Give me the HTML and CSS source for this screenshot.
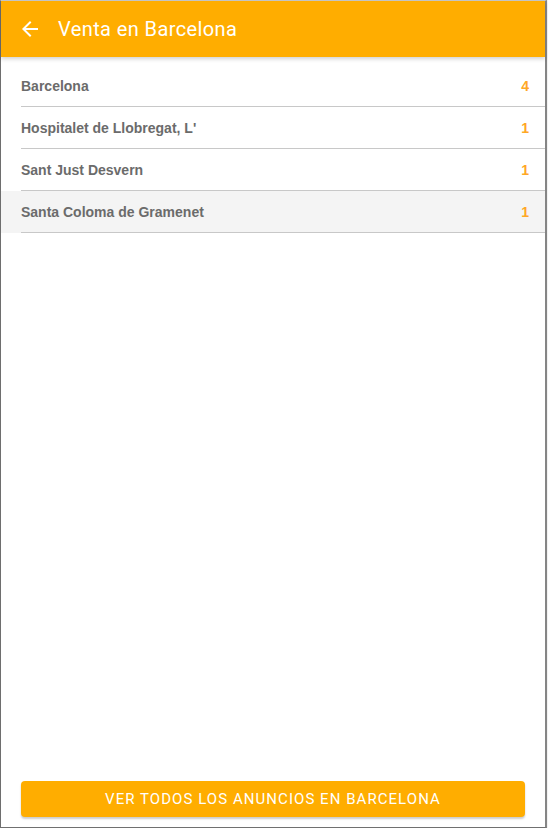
FILE: index.html
```html
<!DOCTYPE html>
<html lang="es">
<head>
<meta charset="utf-8">
<title>Venta en Barcelona</title>
<link rel="stylesheet" href="styles.css">
</head>
<body>
<div class="dialog">
  <header class="topbar">
    <svg class="back" viewBox="0 0 24 24" width="24" height="24" aria-hidden="true">
      <path d="M20 11H7.83l5.59-5.59L12 4l-8 8 8 8 1.41-1.41L7.83 13H20v-2z" fill="#fff"/>
    </svg>
    <h1 class="title">Venta en Barcelona</h1>
  </header>
  <ul class="list">
    <li class="row"><div class="row-inner"><span class="name">Barcelona</span><span class="count">4</span></div></li>
    <li class="row"><div class="row-inner"><span class="name">Hospitalet de Llobregat, L'</span><span class="count">1</span></div></li>
    <li class="row"><div class="row-inner"><span class="name">Sant Just Desvern</span><span class="count">1</span></div></li>
    <li class="row row-hover"><div class="row-inner"><span class="name">Santa Coloma de Gramenet</span><span class="count">1</span></div></li>
  </ul>
  <div class="footer">
    <button class="cta" type="button">Ver todos los anuncios en Barcelona</button>
  </div>
</div>
</body>
</html>
```
FILE: styles.css
```css
html, body {
  margin: 0;
  padding: 0;
  height: 100%;
}
body {
  background: #f2f2f2;
  overflow: hidden;
}
.dialog {
  box-sizing: border-box;
  width: 547px;
  height: 828px;
  background: #fff;
  border-top: 1px solid #c8c8c8;
  border-left: 1px solid #6e6e6e;
  border-right: 2px solid #858585;
  border-bottom: 1px solid #707070;
  display: flex;
  flex-direction: column;
}
.topbar {
  height: 56px;
  flex: none;
  background: #ffad00;
  display: flex;
  align-items: center;
  padding-left: 17px;
  box-shadow: 0 2px 4px rgba(0,0,0,0.18);
  position: relative;
  z-index: 1;
}
.back {
  display: block;
  width: 24px;
  height: 24px;
}
.title {
  margin: 0 0 0 16px;
  font-family: Roboto, "Liberation Sans", sans-serif;
  font-weight: 400;
  font-size: 20px;
  color: #fff;
  letter-spacing: 0.4px;
}
.list {
  list-style: none;
  margin: 0;
  padding: 8px 0 0 0;
  flex: 1;
}
.row {
  padding-left: 20px;
}
.row-hover {
  background: #f4f4f4;
}
.row-inner {
  height: 41px;
  display: flex;
  align-items: center;
  justify-content: space-between;
  border-bottom: 1px solid #c8c8c8;
  padding-right: 16px;
}
.name {
  font-family: "Liberation Sans", Arial, sans-serif;
  font-weight: 700;
  font-size: 14px;
  color: #6b6b6b;
}
.count {
  font-family: "Liberation Sans", Arial, sans-serif;
  font-weight: 700;
  font-size: 14px;
  color: #ffa726;
}
.footer {
  flex: none;
  padding: 0 20px 10px 20px;
}
.cta {
  display: block;
  width: 100%;
  height: 36px;
  border: 0;
  border-radius: 4px;
  background: #ffad00;
  color: #fff;
  font-family: Roboto, "Liberation Sans", sans-serif;
  font-size: 15px;
  font-weight: 400;
  text-transform: uppercase;
  letter-spacing: 1.05px;
  box-shadow: 0 2px 2px rgba(0,0,0,0.2);
  cursor: pointer;
}
```
